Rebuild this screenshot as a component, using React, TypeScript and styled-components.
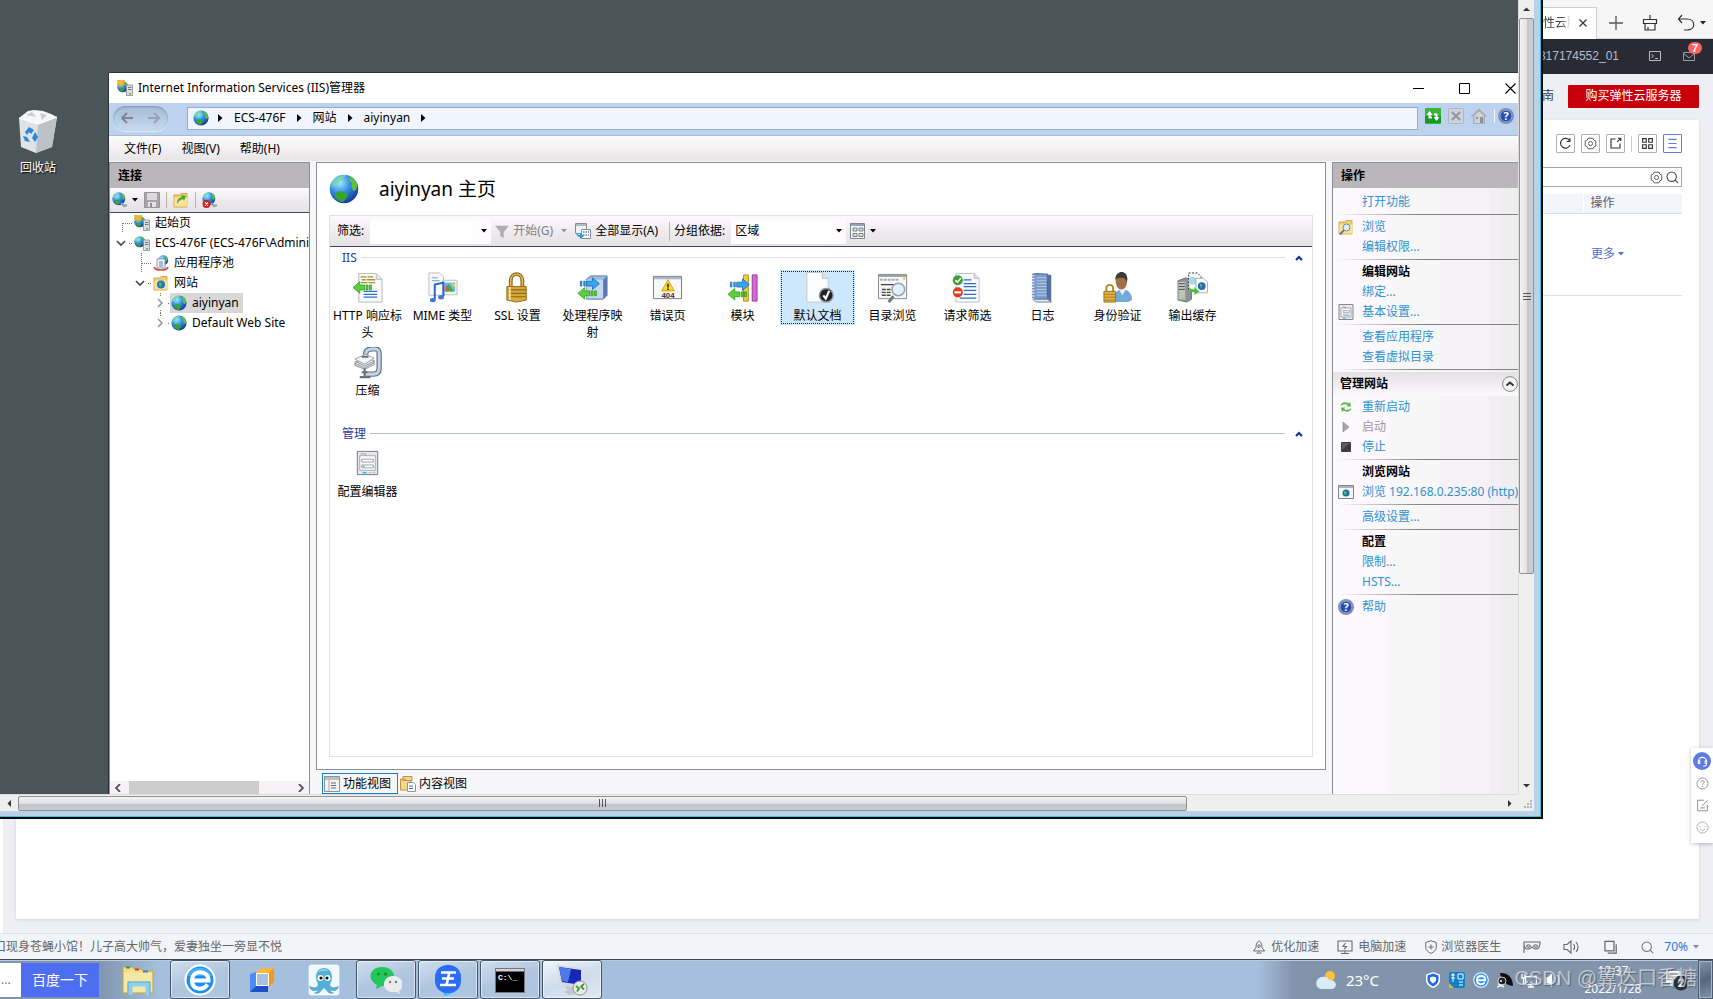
import React from "react";
import styled, { createGlobalStyle, css } from "styled-components";

const ui = '"Noto Sans", "Noto Sans CJK SC", sans-serif';
const web = '"Liberation Sans", "Noto Sans CJK SC", sans-serif';

const GlobalStyle = createGlobalStyle`
  * { box-sizing: border-box; }
  body { margin: 0; overflow: hidden; font: 12px/20px ${ui}; color: #000; }
  button, input, select { font: inherit; color: inherit; margin: 0; padding: 0; border: 0; background: none; border-radius: 0; }
  a { text-decoration: none; color: inherit; }
  ul { list-style: none; margin: 0; padding: 0; }
  h1, h2, h3, p { margin: 0; font: inherit; }
  svg { display: block; flex: none; }
`;

/* ---------- page ---------- */
const Page = styled.div`
  position: relative;
  display: flex;
  flex-direction: column;
  height: 100vh;
  background: #eeeff5;
`;
const Browser = styled.div`
  flex: 1;
  min-height: 0;
  display: flex;
  flex-direction: column;
  font-family: ${web};
`;
const TabStrip = styled.div`
  display: flex;
  justify-content: flex-end;
  align-items: center;
  height: 39px;
  background: #f6f6f7;
  border-bottom: 1px solid #d6d6d8;
  padding: 7px 7px 0 0;
  color: #444;
`;
const BrowserTab = styled.div`
  display: flex;
  align-items: center;
  gap: 8px;
  width: 240px;
  height: 32px;
  justify-content: flex-end;
  padding: 0 9px 0 0;
  margin-right: 12px;
  background: #fff;
  border: 1px solid #cfcfd2;
  border-bottom: 0;
`;
const TabTitle = styled.span`
  width: 40px;
  overflow: hidden;
  white-space: nowrap;
  mask-image: linear-gradient(90deg, #000 75%, transparent);
`;
const BarTools = styled.div<{ $gap: number }>`
  display: flex;
  align-items: center;
  gap: ${(p) => p.$gap}px;
`;
const ConsoleBar = styled.header`
  display: flex;
  justify-content: flex-end;
  align-items: center;
  gap: 30px;
  height: 35px;
  padding: 0 17px 2px 0;
  background: #282b34;
  color: #b9bcc6;
`;
const Mail = styled.button`
  position: relative;
  width: 13px;
  height: 12px;
  margin-left: -8px;
`;
const MailBadge = styled.span`
  position: absolute;
  left: 5px;
  top: -8px;
  width: 14px;
  height: 12px;
  border-radius: 6px;
  background: #fa6461;
  color: #fff;
  font-weight: 700;
  font-size: 11px;
  line-height: 12px;
`;
const ConsoleBody = styled.main`
  flex: 1;
  min-height: 0;
  display: flex;
  flex-direction: column;
  padding: 0 14px 14px 13px;
  border-left: 3px solid #fff;
`;
const ConsoleHead = styled.div`
  display: flex;
  justify-content: flex-end;
  align-items: center;
  gap: 14px;
  height: 46px;
  padding-bottom: 2px;
  color: #3b3f4c;
`;
const BuyButton = styled.button`
  width: 131px;
  height: 23px;
  border-radius: 1px;
  background: #c7000b;
  color: #fff;
`;
const Card = styled.section`
  flex: 1;
  display: flex;
  flex-direction: column;
  align-items: flex-end;
  padding: 14px 17px;
  background: #fff;
  box-shadow: 0 1px 3px rgba(60, 60, 80, 0.15);
`;
const SquareButton = styled.button<{ $on?: boolean }>`
  display: grid;
  place-items: center;
  width: 19px;
  height: 19px;
  border: 1px solid ${(p) => (p.$on ? "#5e7ce0" : "#adb0b8")};
  border-radius: 1px;
`;
const Divider = styled.span<{ $h?: number; $c?: string }>`
  width: 1px;
  height: ${(p) => p.$h ?? 16}px;
  background: ${(p) => p.$c ?? "#ccc"};
`;
const SearchBox = styled.label`
  display: flex;
  align-items: center;
  gap: 3px;
  width: 240px;
  height: 20px;
  margin-top: 14px;
  padding-right: 2px;
  border: 1px solid #a3a6b0;
  input { flex: 1; min-width: 0; outline: 0; }
`;
const ServerTable = styled.table`
  width: 400px;
  margin-top: 7px;
  border-collapse: collapse;
  color: #575d6c;
  th { height: 19px; line-height: 17px; padding: 0; text-align: left; background: #f2f5fc; border-bottom: 1px solid #dfe1e6; font-weight: 400; }
  th + th { width: 99px; padding-left: 7px; border-left: 1px solid #fff; }
  td { height: 82px; padding: 0; border-bottom: 1px solid #dfe1e6; color: #526ecc; }
  td + td { padding-left: 8px; }
`;
const More = styled.a`
  display: flex;
  align-items: center;
  gap: 3px;
`;
const SideDock = styled.aside`
  position: absolute;
  right: 0;
  top: 748px;
  width: 22px;
  height: 95px;
  padding: 4px 0 0 2px;
  display: flex;
  flex-direction: column;
  gap: 4px;
  background: #fff;
  box-shadow: 0 1px 4px rgba(0, 0, 0, 0.25);
`;
const DockButton = styled.button<{ $fill?: boolean }>`
  display: grid;
  place-items: center;
  width: 18px;
  height: 18px;
  border-radius: 9px;
  background: ${(p) => (p.$fill ? "#5e7ce0" : "none")};
`;
const StatusBar = styled.footer`
  display: flex;
  justify-content: space-between;
  align-items: center;
  height: 26px;
  padding: 1px 14px 0 0;
  background: #f1f5f9;
  border-top: 1px solid #dbe5ee;
  color: #666;
`;
const News = styled.a`
  margin-left: -6px;
`;
const StatusTools = styled.div`
  display: flex;
  align-items: center;
  gap: 22px;
`;
const StatusItem = styled.button<{ $gap?: number }>`
  display: flex;
  align-items: center;
  gap: ${(p) => p.$gap ?? 5}px;
`;
const Zoom = styled.span`
  font: 12px/16px ${ui};
  color: #1e7be0;
  margin-right: -5px;
`;

/* ---------- taskbar ---------- */
const Taskbar = styled.nav`
  position: relative;
  display: flex;
  align-items: center;
  justify-content: space-between;
  height: 40px;
  border-top: 1px solid #3c444e;
  box-shadow: inset 0 1px 0 #b9cbe0;
  background: linear-gradient(90deg, #8195ae 0, #8195ae 100px, #a6bfdc 160px, #a6bfdc calc(100% - 455px), #8194ac calc(100% - 420px));
  font-family: ${ui};
  color: #fff;
`;
const TaskGroup = styled.div`
  display: flex;
  align-items: center;
  height: 100%;
`;
const DeskInput = styled.input`
  width: 21px;
  height: 34px;
  background: #fff !important;
  color: #777 !important;
  padding-left: 1px;
`;
const BaiduButton = styled.button`
  width: 78px;
  height: 34px;
  background: #4e6ef2;
  font-size: 14px;
  margin-right: 9px;
`;
const TaskButton = styled.button<{ $open?: boolean; $active?: boolean }>`
  display: grid;
  place-items: center;
  width: 60px;
  height: 39px;
  margin-right: 2px;
  border-radius: 3px;
  ${(p) =>
    p.$open &&
    css`
      border: 1px solid #46566a;
      box-shadow: inset 0 0 0 1px rgba(255, 255, 255, 0.55);
      background: ${p.$active ? "linear-gradient(160deg, #f0f5fa, #cfdcec 50%, #dfe8f2)" : "linear-gradient(160deg, #d0deee, #b0c6df 50%, #adc4df)"};
    `}
`;
const Weather = styled.button`
  display: flex;
  align-items: center;
  gap: 9px;
  margin-right: 46px;
  font-size: 15px;
`;
const Tray = styled.div`
  display: flex;
  align-items: center;
  gap: 8px;
`;
const Clock = styled.time`
  width: 82px;
  margin: 0 11px;
  text-align: center;
  line-height: 18px;
`;
const ShowDesktop = styled.button`
  width: 15px;
  height: 39px;
  margin-left: 9px;
  border: 1px solid #4d5a6b;
  box-shadow: inset 0 0 0 1px #a7b5c6;
  background: linear-gradient(160deg, #8595a8, #56677b 50%, #7f92a8);
`;
const Watermark = styled.p`
  position: absolute;
  right: 16px;
  top: 4px;
  font: 20px/28px ${web};
  color: rgba(225, 228, 232, 0.72);
  text-shadow: 1px 1px 1px rgba(50, 60, 75, 0.55);
  pointer-events: none;
`;

/* ---------- remote session window ---------- */
const Remote = styled.div`
  position: absolute;
  left: 0;
  top: 0;
  width: calc(100% - 170px);
  height: calc(100% - 180px);
  display: grid;
  grid-template-columns: minmax(0, 1fr) 16px;
  grid-template-rows: minmax(0, 1fr) 17px;
  padding: 0 7px 6px 0;
  background: #bad1ea;
  border: solid #000;
  border-width: 0 2px 2px 0;
  box-shadow: inset -1px -1px 0 #35bede;
`;
const Desktop = styled.div`
  position: relative;
  overflow: hidden;
  background: #4a5459;
`;
const DesktopIcon = styled.button`
  position: absolute;
  left: 8px;
  top: 107px;
  width: 60px;
  display: flex;
  flex-direction: column;
  align-items: center;
  gap: 3px;
  color: #fff !important;
  text-shadow: 1px 1px 1px #000;
`;
const Bar = styled.div<{ $v?: boolean }>`
  display: flex;
  flex-direction: ${(p) => (p.$v ? "column" : "row")};
  align-items: center;
  background: #efefef;
  border: 0 solid #dcdcdc;
  border-width: ${(p) => (p.$v ? "0 0 0 1px" : "1px 0 0")};
`;
const BarArrow = styled.button<{ $v?: boolean }>`
  display: grid;
  place-items: center;
  width: ${(p) => (p.$v ? 15 : 18)}px;
  height: ${(p) => (p.$v ? 18 : 16)}px;
`;
const Thumb = styled.div<{ $v?: boolean }>`
  display: grid;
  place-items: center;
  border: 1px solid #8f9194;
  border-radius: 2px;
  ${(p) =>
    p.$v
      ? "width:15px;height:70%;background:linear-gradient(90deg,#f4f4f4,#e3e3e5 50%,#c6c7ca 55%,#cfd0d3);"
      : "height:15px;width:77%;background:linear-gradient(#f4f4f4,#dedfe0 50%,#c2c4c6 55%,#cbccd0);"}
`;
const Spacer = styled.span`
  flex: 1;
`;
const Corner = styled.div`
  display: grid;
  place-items: end;
  padding: 2px;
  background: #efefef;
`;

/* ---------- IIS manager ---------- */
const Win = styled.div`
  position: absolute;
  left: 109px;
  top: 73px;
  right: 0;
  bottom: 0;
  display: flex;
  flex-direction: column;
  background: #f7f6f8;
  box-shadow: 0 -1px 0 #2b3236, -1px 0 0 #2b3236;
`;
const TitleBar = styled.div`
  display: flex;
  align-items: center;
  height: 30px;
  padding-left: 8px;
  background: #fff;
`;
const TitleText = styled.h1`
  margin-left: 5px;
  flex: 1;
`;
const WinButton = styled.button`
  display: grid;
  place-items: center;
  width: 46px;
  height: 28px;
  &:last-child { margin-right: -15px; }
`;
const NavBar = styled.div`
  display: flex;
  align-items: center;
  height: 33px;
  padding: 0 4px 2px;
  background: #bdd2ee;
  border-bottom: 1px solid #a9b9d2;
`;
const BackForward = styled.div`
  display: flex;
  align-items: center;
  justify-content: space-around;
  width: 55px;
  height: 25px;
  border-radius: 13px;
  background: linear-gradient(#a3bad6, #c7daf0);
  box-shadow: inset 0 1px 2px #7f97b5, 0 1px 1px #dfeafa;
`;
const Address = styled.nav`
  flex: 1;
  display: flex;
  align-items: center;
  gap: 11px;
  height: 23px;
  margin: 0 7px 0 19px;
  padding-left: 5px;
  background: #f0f5fe;
  border: 1px solid #98acc9;
  > :first-child { margin-right: -2px; }
`;
const NavTools = styled.div`
  display: flex;
  align-items: center;
  gap: 7px;
  padding-bottom: 4px;
  > :last-child { margin-left: -4px; }
`;
const MenuBar = styled.div`
  display: flex;
  gap: 20px;
  height: 25px;
  padding: 2px 15px 0;
  line-height: 21px;
  background: linear-gradient(#fdfcfd, #f1edf0 60%, #e8e5e7);
  button { height: 21px; }
`;
const Work = styled.div`
  flex: 1;
  min-height: 0;
  display: grid;
  grid-template-columns: 201px minmax(0, 1fr) 186px;
  column-gap: 6px;
  padding-top: 1px;
`;
const Connections = styled.aside`
  display: flex;
  flex-direction: column;
  min-height: 0;
  border: solid #8d8f92;
  border-width: 1px 1px 0;
  background: #fff;
`;
const PaneTitle = styled.h2`
  height: 25px;
  padding: 0 8px;
  line-height: 25px;
  background: #bab7ba;
  font-weight: 600;
`;
const ConnTools = styled.div`
  display: flex;
  align-items: center;
  gap: 6px;
  height: 25px;
  padding: 0 2px;
  background: linear-gradient(#fdfbfd, #ece7eb 60%, #e5e3e5);
  border-bottom: 1px solid #45436b;
`;
const Tree = styled.ul`
  flex: 1;
  overflow: hidden;
  padding-left: 1px;
`;
const TreeRow = styled.li`
  display: flex;
  align-items: center;
  height: 20px;
  white-space: nowrap;
`;
const TreeLink = styled.a<{ $on?: boolean }>`
  display: flex;
  align-items: center;
  gap: 5px;
  height: 20px;
  padding: 0 4px 0 1px;
  background: ${(p) => (p.$on ? "#d9d8d9" : "none")};
`;
const TreeScroll = styled.div`
  display: flex;
  align-items: center;
  justify-content: space-between;
  height: 13px;
  padding: 0 4px;
  background: #f5f1f5;
`;
const TreeThumb = styled.div`
  width: 130px;
  height: 13px;
  margin-right: 32px;
  background: #cdcdcd;
`;
const Center = styled.div`
  display: flex;
  flex-direction: column;
  min-height: 0;
`;
const HomePane = styled.section`
  flex: 1;
  display: flex;
  flex-direction: column;
  padding: 11px 12px 12px;
  background: #fff;
  border: 1px solid #8d8f92;
`;
const HomeTitle = styled.h2`
  display: flex;
  align-items: center;
  gap: 20px;
  height: 30px;
  margin-bottom: 11px;
  font-size: 19px;
  line-height: 28px;
`;
const FeatureBox = styled.div`
  flex: 1;
  border: 1px solid #e4e1e5;
`;
const FilterBar = styled.div`
  display: flex;
  align-items: center;
  height: 31px;
  padding-left: 7px;
  white-space: nowrap;
  background: linear-gradient(#fdfafd, #efeaee 55%, #e4e3e4);
  border-bottom: 1px solid #45436b;
`;
const Combo = styled.div<{ $w: number }>`
  position: relative;
  display: flex;
  align-items: center;
  width: ${(p) => p.$w}px;
  height: 25px;
  margin: 0 4px 0 6px;
  padding-right: 4px;
  background: linear-gradient(90deg, #fff 80%, #fdfafd);
  input, select { flex: 1; min-width: 0; height: 24px; outline: 0; appearance: none; }
  select { padding-left: 4px; }
  svg { pointer-events: none; }
`;
const ToolButton = styled.button<{ $dim?: boolean; $after?: number }>`
  display: flex;
  align-items: center;
  gap: 4px;
  margin-right: ${(p) => p.$after ?? 8}px;
  color: ${(p) => (p.$dim ? "#838083" : "#000")} !important;
`;
const GroupLabel = styled.label`
  margin-left: 4px;
`;
const GroupHead = styled.h3<{ $strong?: boolean }>`
  display: flex;
  align-items: center;
  gap: 4px;
  height: 20px;
  padding: 1px 7px 0 12px;
  color: #1e3c9c;
  &::after {
    content: "";
    order: 1;
    flex: 1;
    height: 1px;
    background: ${(p) => (p.$strong ? "#b4bddd" : "#dedde9")};
  }
  svg { order: 2; margin: 0 2px 0 6px; }
`;
const Grid = styled.div`
  display: grid;
  grid-template-columns: repeat(auto-fill, 75px);
  grid-auto-rows: 75px;
  padding: 2px 60px 4px 0;
`;
const Feature = styled.button<{ $on?: boolean }>`
  display: flex;
  flex-direction: column;
  align-items: center;
  gap: 3px;
  width: 75px;
  height: ${(p) => (p.$on ? "55px" : "72px")};
  padding: 2px 2px 0;
  margin-top: 1px;
  line-height: 17px;
  text-align: center;
  ${(p) => p.$on && css`background: #cde8fd content-box; outline: 1px dotted #222; outline-offset: -2px; background-clip: border-box;`}
`;
const ViewTabs = styled.div`
  display: flex;
  align-items: center;
  height: 24px;
  padding: 3px 0 0 6px;
`;
const ViewTab = styled.button<{ $on?: boolean }>`
  display: flex;
  align-items: center;
  gap: 3px;
  height: 21px;
  padding: 0 6px 0 1px;
  border: 1px solid ${(p) => (p.$on ? "#1481d0" : "transparent")};
`;
const Actions = styled.aside`
  border: solid #8d8f92;
  border-width: 1px 0 0 1px;
  background: linear-gradient(90deg, #fdfafe 0, #fcf6fd 57px, #f7f7f7 57px, #f7f7f7 107px, #f6f2f6 107px, #f6f2f6 156px, #f3eef6 156px, #f3eef6 168px, #eeeeee 168px);
  overflow: hidden;
`;
const rule = css`
  content: "";
  display: block;
  height: 5px;
  background: linear-gradient(90deg, rgba(130, 128, 130, 0), #858386 45%) 4px 2px / 100% 1px no-repeat;
`;
const ActionSection = styled.ul`
  & + &::before { ${rule} }
`;
const ActionRow = styled.li<{ $kind?: "head" | "off" | "link" }>`
  display: flex;
  align-items: center;
  gap: 8px;
  height: 20px;
  padding-left: 5px;
  white-space: nowrap;
  color: ${(p) => (p.$kind === "head" ? "#000" : p.$kind === "off" ? "#9b999b" : "#2f93d0")};
  font-weight: ${(p) => (p.$kind === "head" ? 600 : 400)};
`;
const IconSlot = styled.span`
  display: grid;
  place-items: center;
  width: 16px;
  height: 16px;
  flex: none;
`;
const ActionTop = styled.div`
  padding-top: 4px;
  &::after { ${rule} }
`;
const ActionHead = styled.h3`
  display: flex;
  align-items: center;
  justify-content: space-between;
  height: 24px;
  margin-bottom: 1px;
  padding-left: 7px;
  font-weight: 600;
  background: linear-gradient(#e4e1e4, #fbf9fb);
`;

/* ---------- drawings ---------- */
type S = { s?: number };
const Svg = ({ s = 16, v = 16, h, children }: { s?: number; v?: number; h?: number; children: React.ReactNode }) => (
  <svg width={s} height={h ?? s} viewBox={`0 0 ${v} ${h ? (v * h) / s : v}`} fill="none" aria-hidden="true">
    {children}
  </svg>
);

const GlobeShape = () => (
  <>
    <defs>
      <radialGradient id="globe" cx=".35" cy=".28" r=".8">
        <stop offset="0" stopColor="#a5ecff" />
        <stop offset=".45" stopColor="#3490e2" />
        <stop offset="1" stopColor="#102f96" />
      </radialGradient>
    </defs>
    <circle cx="8" cy="8" r="7.6" fill="url(#globe)" />
    <path d="M1.500 5C3 2 6 .5 9 .6L8 2 6.500 2.600 5.500 5 3 6.500 1.500 7Z" fill="#7bd9a8" opacity=".75" />
    <path d="M11 1.200c2 .8 3.600 2.600 4.200 4.800l-.7 2.500-1.500.5-1.200-2.500.5-1.500L10.800 3.500Z" fill="#5cc040" />
    <path d="M3.500 10l3-1L10 10.500l-.5 2-2 2.600C5 14.800 3.500 13 3 11.500Z" fill="#36a533" />
  </>
);
const Globe = ({ s = 16 }: S) => <Svg s={s}><GlobeShape /></Svg>;
const Tower = () => (
  <>
    <path d="M9.500 5h6v10.500h-6z" fill="#dadedf" stroke="#848b8d" strokeWidth=".8" />
    <path d="M11 7.500h3.500M11 9.500h3.500" stroke="#70787a" />
    <path d="M12 13h2v1.500h-2z" fill="#58b848" />
  </>
);
const ServerIcon = ({ star }: { star?: boolean }) => (
  <Svg>
    <g transform="translate(0 1) scale(.72)"><GlobeShape /></g>
    <Tower />
    {star && <path d="M0 0h3l1 1L6.500 0l1.500.5L7 3l1 2H5L4 7 2.500 5 0 4.500 1 2.500z" fill="#f4b92c" stroke="#c98a15" strokeWidth=".4" />}
  </Svg>
);
const Caret = ({ c = "#000" }: { c?: string }) => <svg width="6" height="4" viewBox="0 0 6 4"><path d="M0 0h6L3 3.500z" fill={c} /></svg>;
const Play = () => <svg width="5" height="8" viewBox="0 0 5 8"><path d="M0 0l4.500 4L0 8z" fill="#000" /></svg>;
const Chevron = () => <Svg s={8} v={8}><path d="M1 6l3-3 3 3" stroke="#0a2f9c" strokeWidth="2" /></Svg>;
const HelpDisc = () => (
  <Svg>
    <circle cx="8" cy="8" r="7.300" fill="#2450b5" stroke="#8d93a0" strokeWidth="1.400" />
    <circle cx="8" cy="8" r="6" stroke="#d6deef" strokeWidth=".7" />
    <text x="8" y="12" textAnchor="middle" fontFamily="Noto Sans" fontWeight="700" fontSize="11" fill="#fff">?</text>
  </Svg>
);
const Folder = ({ children }: { children?: React.ReactNode }) => (
  <Svg>
    <path d="M1 3h6l1-1.500h6V15H1z" fill="#f3cf6c" stroke="#c49a38" strokeWidth=".8" />
    <path d="M1.500 5.500h13v9h-13z" fill="#fae39a" />
    {children}
  </Svg>
);
const Props = ({ s = 16 }: S) => (
  <Svg s={s}>
    <path d="M1 .5h14v15H1z" fill="#e8eaed" stroke="#85888e" />
    <path d="M3 4h10v9H3z" fill="#fff" stroke="#a4a8ae" />
    <path d="M4.500 3h3v2M5 6.500h6.500v1.800H5zM5 10h6.500M5 11.500h6.500" stroke="#9aa0a8" strokeWidth=".8" />
    <path d="M5 14.200h3" stroke="#2bc3f0" />
  </Svg>
);
const Sheet = () => <path d="M7 1.500h18l6 6V31H7z" fill="#f7f9fb" stroke="#b4bac0" />;
const ArrowL = ({ y }: { y: number }) => (
  <path transform={`translate(0 ${y})`} d="M1 7L8 1v3.500h5v5H8V13zM14.500 4.500h2v5h-2zM18 4.500h2v5h-2z" fill="#5fd03c" stroke="#2f9a1d" strokeWidth=".8" />
);
const ArrowR = ({ y }: { y: number }) => (
  <path transform={`translate(2 ${y})`} d="M21 7L14 1v3.500H8v5h6V13zM5 4.500h1.500v5H5zM1.500 4.500H3v5H1.500z" fill="#35a7f0" stroke="#1468b5" strokeWidth=".8" />
);

const art: Record<string, React.ReactNode> = {
  http: (
    <>
      <Sheet />
      <path d="M25 1.500v6h6" stroke="#b4bac0" fill="#e5e8eb" />
      <path d="M9 5h6m1 0h6M10 8h4m1 0h9M9 11h7m1 0h7" stroke="#a8912f" strokeWidth="1.400" />
      <path d="M12 20h14M12 23h14M12 26h14" stroke="#2b77c8" strokeWidth="1.300" />
      <ArrowL y={9} />
    </>
  ),
  mime: (
    <>
      <path d="M2 1h11l4 4v19H2z" fill="#f8f9fb" stroke="#b9bec6" />
      <path d="M5 6h6M5 9h8" stroke="#6a9bd6" />
      <path d="M16 8.500h15v15H16z" fill="#f4f5f7" stroke="#b9bec6" />
      <path d="M18 11h11v9H18z" fill="#69b5ef" />
      <path d="M18 20l4-8 6 8z" fill="#46a838" /><path d="M19 14l4 3-3 3z" fill="#df5b2a" /><path d="M24 12h5v4z" fill="#f3d33f" />
      <path d="M8 28V13l9-2v14" stroke="#2b62c4" strokeWidth="2" />
      <ellipse cx="6" cy="29" rx="3" ry="2.300" fill="#3a79da" /><ellipse cx="14.500" cy="26" rx="3" ry="2.300" fill="#3a79da" />
    </>
  ),
  lock: (
    <>
      <path d="M9 15V9c0-9 12-9 12 0v6" stroke="#8d6a1c" strokeWidth="4" /><path d="M9 15V9c0-9 12-9 12 0v6" stroke="#e0bb58" strokeWidth="1.600" />
      <path d="M5 15h20v14l-10 2-10-2z" fill="#d9a93c" stroke="#936d1d" />
      <path d="M6 18.500h19M6 22h19M6 25.500h19" stroke="#8f6a1f" strokeWidth="1.200" /><path d="M8 15.500v13" stroke="#f8e29b" strokeWidth="2" />
    </>
  ),
  handler: (
    <>
      <path d="M10 7l4-3h17v20l-4 4H10z" fill="#9db9dc" stroke="#6682ab" /><path d="M10 8h17v19H10z" fill="#c6d7ee" /><path d="M27 8l4-4v20l-4 4z" fill="#587bb2" />
      <ArrowR y={5} /><ArrowL y={15} />
    </>
  ),
  error: (
    <>
      <path d="M1.500 4.500h29v23h-29z" fill="#f8f8f8" stroke="#777b82" /><path d="M2 5h28v2.500H2z" fill="#a9b4c4" />
      <path d="M16.500 8L23 19.500H10z" fill="#fcd52a" stroke="#d7a212" /><path d="M16.500 12v4m0 1v1.500" stroke="#222" strokeWidth="1.600" />
      <text x="16.500" y="26.500" textAnchor="middle" fontFamily="Liberation Sans" fontWeight="700" fontSize="8" fill="#333">404</text>
    </>
  ),
  module: (
    <>
      <path d="M17 3h5v27h-5z" fill="#f2cc3e" stroke="#b18f1c" /><path d="M26 3h5v27h-5z" fill="#d765d8" stroke="#9a3aa0" />
      <ArrowR y={6} /><ArrowL y={16} />
    </>
  ),
  doc: (
    <>
      <path d="M5 .5h16l6 6V31H5z" fill="#fbfcfd" stroke="#c3c8ce" /><path d="M21 .5v6h6" fill="#e2e6ea" stroke="#b9bfc5" />
      <circle cx="25" cy="24" r="7" fill="#222" stroke="#8d9196" strokeWidth="1.500" /><path d="M22 24l2.500 3.500L28 19.500" stroke="#fff" strokeWidth="2.200" />
    </>
  ),
  browse: (
    <>
      <path d="M1.500 2.500h29v25h-29z" fill="#f7f7f6" stroke="#85888d" /><path d="M2 3h28v2H2z" fill="#999fa8" /><path d="M3 8h20" stroke="#aaa" strokeDasharray="3 1" strokeWidth="2" /><path d="M28 5v3" stroke="#f0cf38" strokeWidth="2" />
      <path d="M4 13h14M5 18h4m1 0h4M5 21h4m1 0h4M5 24h4m1 0h4" stroke="#444" strokeWidth="1.400" />
      <path d="M17 25l-5 6" stroke="#777" strokeWidth="3" /><circle cx="22" cy="18" r="6.500" fill="#e3f1fb" stroke="#9aa3ad" strokeWidth="1.600" />
    </>
  ),
  filter: (
    <>
      <path d="M4 1.500h19l5 5V31H4z" fill="#f8f9fb" stroke="#bdc2c8" /><path d="M23 1.500v5h5" fill="#e2e5e9" stroke="#b5bac0" />
      <path d="M12 8h8M12 12h13M12 15h13M12 19h13M12 23h13M8 27h17" stroke="#2d6fc0" strokeWidth="1.300" />
      <circle cx="6" cy="8.500" r="5.200" fill="#3f9f3d" /><path d="M3.500 8.500l2 2 3.500-4" stroke="#fff" strokeWidth="1.600" />
      <circle cx="6" cy="21" r="5.200" fill="#df3c1b" /><path d="M2.500 21h7" stroke="#fff" strokeWidth="2.200" />
    </>
  ),
  log: (
    <>
      <path d="M9 1l16 2v28L9 29z" fill="#54729f" /><path d="M6 2h15v26H6z" fill="#7d9cc9" stroke="#4a669a" /><path d="M6 28l3 3h16l-4-3z" fill="#dfe5ee" stroke="#6f86aa" />
      <path d="M10 6h10M10 9h10M10 12h10M10 15h10M10 18h10M10 21h10M10 24h10" stroke="#b3c8e5" /><path d="M6 3v25" stroke="#e3eaf4" strokeWidth="3" strokeDasharray="1.500 1.500" />
    </>
  ),
  auth: (
    <>
      <path d="M12 31c0-9 3-13 9-13 7 0 10 5 10 11l-4 2z" fill="#72aade" /><path d="M17 17l4 7 4-7z" fill="#f0f4f8" />
      <path d="M14 7c0-8 12-8 12 0 0 7-2 11-6 11s-6-4-6-11z" fill="#a36f45" /><path d="M14 8c-1-10 13-11 12 0l-1 3c0-4-2-5-5-5s-4 0-6 2z" fill="#3c3a3a" />
      <path d="M4.500 21v-4c0-5 7-5 7 0v4" stroke="#b5892a" strokeWidth="2" /><path d="M2 20h12v11H2z" fill="#e1b544" stroke="#97711d" /><path d="M2 23h12M2 26h12M2 29h12" stroke="#a67d24" />
    </>
  ),
  cache: (
    <>
      <path d="M1 9l8-3 6 2v20l-5 3-9-2z" fill="#8d9193" stroke="#5f6466" strokeWidth=".8" /><path d="M1.500 10h7v19l-7-1z" fill="#bfc3c5" /><path d="M2 12h6M2 15h6M2 18h6" stroke="#555" />
      <path d="M12 1h9l4 4v14H12z" fill="#f4f8fa" stroke="#333" strokeDasharray="2 1.500" /><circle cx="16" cy="9" r="4" fill="#a8d8e2" />
      <path d="M19.500 6.500h8l4 4v11h-12z" fill="#fafbfc" stroke="#a9afb5" /><circle cx="25.500" cy="14.500" r="4" fill="#2466b7" /><path d="M23 12l3 1-1 4z" fill="#56c34d" />
      <path d="M12 14c1 4 4 4 6 4v-2.500l5 4.500-5 4V21c-4 0-6-3-6-7z" fill="#48c33a" /><circle cx="6" cy="27" r="1.300" fill="#7df04a" />
    </>
  ),
  zip: (
    <>
      <path d="M14 8c0-5 3-6 7-6h3c4 0 4 3 4 6v14c0 4-2 6-6 6h-8" stroke="#5c6f87" strokeWidth="5.500" /><path d="M14 8c0-5 3-6 7-6h3c4 0 4 3 4 6v14c0 4-2 6-6 6h-8" stroke="#c4d2e1" strokeWidth="3.200" />
      <path d="M3 16l11-5 9 3v4l-10 5-10-4z" fill="#e1e3e5" stroke="#7e8184" strokeWidth=".8" /><path d="M3 12.500l11-5 9 4-10 6z" fill="#f7f7f7" stroke="#8b8e91" strokeWidth=".8" /><path d="M3 14.500l10 5 10-5M3 17l10 4.500L23 16" stroke="#888" strokeWidth=".8" />
      <path d="M10 10h7M13 22v8M8 31h11M10 26h6" stroke="#66717e" strokeWidth="2.200" />
    </>
  ),
  config: (
    <>
      <path d="M5.500 3.500h21v24h-21z" fill="#e6e8eb" stroke="#777b80" /><path d="M8 8h16v15H8z" fill="#fff" stroke="#a3a8ae" />
      <path d="M9 6h5v2M10 11.500h12v3H10zM10 17.500h12v3H10z" stroke="#9aa0a7" /><path d="M11 19h2M11 25.500h4" stroke="#2cb9ea" strokeWidth="1.400" /><path d="M17 25.500h3m1 0h3" stroke="#b9bcc0" />
    </>
  ),
};
const Art = ({ n }: { n: string }) => <Svg s={32} v={33}>{art[n]}</Svg>;

const MonitorGlobe = ({ off }: { off?: boolean }) => (
  <Svg>
    <g transform="scale(.85)"><GlobeShape /></g>
    <path d="M9 11l3 3 3-1" stroke="#8da1b0" strokeWidth="2" />
    {off && (<><circle cx="4.500" cy="12" r="4" fill="#d3221f" /><path d="M3 10.500l3 3m0-3l-3 3" stroke="#fff" strokeWidth="1.200" /></>)}
  </Svg>
);

/* ---------- data ---------- */
const features = [
  ["http", "HTTP 响应标头"], ["mime", "MIME 类型"], ["lock", "SSL 设置"], ["handler", "处理程序映射"],
  ["error", "错误页"], ["module", "模块"], ["doc", "默认文档"], ["browse", "目录浏览"],
  ["filter", "请求筛选"], ["log", "日志"], ["auth", "身份验证"], ["cache", "输出缓存"], ["zip", "压缩"],
];

type Act = { t: string; kind?: "head" | "off"; icon?: React.ReactNode };
const topActions: Act[][] = [
  [{ t: "打开功能" }],
  [
    { t: "浏览", icon: <Folder><path d="M6 11l-4 4.500" stroke="#777" strokeWidth="2" /><circle cx="8.500" cy="8.500" r="3.500" fill="#d7ebf9" stroke="#7c8c9c" /></Folder> },
    { t: "编辑权限..." },
  ],
  [{ t: "编辑网站", kind: "head" }, { t: "绑定..." }, { t: "基本设置...", icon: <Props /> }],
  [{ t: "查看应用程序" }, { t: "查看虚拟目录" }],
];
const siteActions: Act[][] = [
  [
    { t: "重新启动", icon: <Svg s={14} v={14}><path d="M1.500 6C2 2 7 1.500 9.500 3.500L11 2l1 4.500H7.500L9 5C6.500 3.500 4 4 1.500 6z" fill="#4fbf46" /><path d="M12.500 8c-.5 4-5.500 4.500-8 2.500L3 12 2 7.500h4.500L5 9c2.500 1.500 5 1 7.500-1z" fill="#4fbf46" /></Svg> },
    { t: "启动", kind: "off", icon: <Svg s={10} v={10}><path d="M2 0l6 5-6 5z" fill="#a5a5a5" stroke="#858585" strokeWidth=".6" /></Svg> },
    { t: "停止", icon: <Svg s={10} v={10}><rect width="10" height="10" rx="1" fill="#3c3c3c" /><path d="M1 1h8L1 8z" fill="#5c5c5c" /></Svg> },
  ],
  [
    { t: "浏览网站", kind: "head" },
    { t: "浏览 192.168.0.235:80 (http)", icon: <Svg><path d="M.5 1.500h15v13H.5z" fill="#f4f6f8" stroke="#7f868d" /><path d="M1 2h14v2H1z" fill="#aab5c1" /><circle cx="8" cy="9" r="3.500" fill="#1f69c0" /><path d="M6 7l3 1-1 3-2-1z" fill="#4fbe47" /></Svg> },
  ],
  [{ t: "高级设置..." }],
  [{ t: "配置", kind: "head" }, { t: "限制..." }, { t: "HSTS..." }],
  [{ t: "帮助", icon: <HelpDisc /> }],
];
const ActionList = ({ groups }: { groups: Act[][] }) => (
  <>
    {groups.map((g, i) => (
      <ActionSection key={i}>
        {g.map((a) => (
          <ActionRow key={a.t} $kind={a.kind}>
            <IconSlot>{a.icon}</IconSlot>
            {a.kind ? <span>{a.t}</span> : <a href="#action">{a.t}</a>}
          </ActionRow>
        ))}
      </ActionSection>
    ))}
  </>
);

const Gutter = ({ w, d, open, x }: { w: number; d: string; open?: boolean; x?: number }) => (
  <svg width={w} height="20" viewBox={`0 0 ${w} 20`} fill="none">
    <path d={d} stroke="#777" strokeDasharray="1 1" />
    {x && (open ? <path d={`M${x - 4} 8l4 4 4-4`} stroke="#444" strokeWidth="1.600" /> : <path d={`M${x - 2} 6l4 4-4 4`} stroke="#999" strokeWidth="1.600" />)}
  </svg>
);
const tree = [
  { t: "起始页", g: <Gutter w={22} d="M11.500 10v10M12 10.500h10" />, i: <ServerIcon star /> },
  { t: "ECS-476F (ECS-476F\\Administrator)", g: <Gutter w={22} d="M18 10.500h4" open x={10} />, i: <ServerIcon /> },
  {
    t: "应用程序池", g: <Gutter w={41} d="M30.500 0v20M31 10.500h10" />,
    i: <Svg><g transform="translate(5 0) scale(.65)"><GlobeShape /></g><path d="M4 4h8v9H4z" fill="#f5f8fb" stroke="#8c98a5" /><path d="M6 7h4M6 9h4M6 11h4" stroke="#4a7fc0" /><path d="M1 12c1 4 13 4 14 0" stroke="#d2463b" strokeWidth="1.600" /></Svg>,
  },
  { t: "网站", g: <Gutter w={41} d="M37 10.500h4" open x={29} />, i: <Folder><circle cx="8" cy="9.500" r="4" fill="#2573c9" /><path d="M6 7l3 1-1 4-2-1z" fill="#4fbe47" /></Folder> },
  { t: "aiyinyan", g: <Gutter w={59} d="M49.500 0v3M49.500 17v3M57 10.500h2" x={49} />, i: <Globe />, on: true },
  { t: "Default Web Site", g: <Gutter w={59} d="M49.500 0v3M57 10.500h2" x={49} />, i: <Globe /> },
];

const line = { stroke: "#666", strokeWidth: 1.1 };
const Gear = () => (
  <Svg s={13}><path d="M5 1.500h6l1 2.300 2.500 1.200v6L12 12.200l-1 2.300H5l-1-2.300L1.500 11V5L4 3.800z" stroke="#555b69" strokeWidth="1.200" /><circle cx="8" cy="8" r="2.500" stroke="#555b69" strokeWidth="1.200" /></Svg>
);
const Lens = ({ c = "#444a58" }: { c?: string }) => <Svg s={13}><circle cx="7" cy="7" r="5.800" stroke={c} strokeWidth="1.300" /><path d="M11 11l4 4" stroke={c} strokeWidth="1.300" /></Svg>;
const IeDisc = ({ s = 32 }: S) => (
  <Svg s={s} v={32}>
    <circle cx="16" cy="16" r="15.500" fill="#fff" /><circle cx="16" cy="16" r="13.500" fill="#1f8fee" /><path d="M4 12C7 1 25 1 28 12z" fill="#48aef8" />
    <path d="M8 16.500h16.500c0-11-16-11-16.500-.5-.5 10 11 11 15.500 4.500" stroke="#fff" strokeWidth="4" />
  </Svg>
);

export default function App() {
  return (
    <>
      <GlobalStyle />
      <Page>
        <Browser>
          <TabStrip>
            <BrowserTab>
              <TabTitle>弹性云服务器</TabTitle>
              <button aria-label="关闭标签"><Svg s={8} v={8}><path d="M.5.5l7 7m0-7l-7 7" stroke="#333" strokeWidth="1.200" /></Svg></button>
            </BrowserTab>
            <BarTools $gap={5}>
              <BarTools $gap={19}>
                <button aria-label="新标签"><Svg s={14} v={14}><path d="M7 0v14M0 7h14" stroke="#555" strokeWidth="1.300" /></Svg></button>
                <button aria-label="清理"><Svg s={16}><path d="M8 0v4M1.500 4.500h13v4h-13zM3 8.500V15h10V8.500M6 12v3" stroke="#333" strokeWidth="1.200" /></Svg></button>
                <button aria-label="撤销"><Svg s={18} v={18}><path d="M5 1L1.500 5 5 9M2 5h8c9 0 9 11 0 11H7" stroke="#333" strokeWidth="1.200" /></Svg></button>
              </BarTools>
              <Caret c="#222" />
            </BarTools>
          </TabStrip>
          <ConsoleBar>
            <span>hw317174552_01</span>
            <button aria-label="终端"><Svg s={12} v={12}><path d="M.5 1.500h11v9H.5zM2.500 4l2 2-2 2M6 8.500h3" stroke="#b9bcc6" /></Svg></button>
            <Mail aria-label="消息">
              <Svg s={12} v={12}><path d="M.5 2.500h11v8H.5zM.5 3.500L6 8l5.500-4.500" stroke="#9a9da8" /></Svg>
              <MailBadge>7</MailBadge>
            </Mail>
          </ConsoleBar>
          <ConsoleBody>
            <ConsoleHead><a href="#guide">使用指南</a><BuyButton>购买弹性云服务器</BuyButton></ConsoleHead>
            <Card>
              <BarTools $gap={6}>
                <SquareButton aria-label="刷新"><Svg s={13}><path d="M13 4.500A6 6 0 1013.500 10M13.500 1.500v4h-4" stroke="#333" strokeWidth="1.400" /></Svg></SquareButton>
                <SquareButton aria-label="设置"><Gear /></SquareButton>
                <SquareButton aria-label="导出"><Svg s={13}><path d="M8 2.500H2.500v11h11V8M10 6l4-4M11 1.500h3.500V5" stroke="#333" strokeWidth="1.400" /></Svg></SquareButton>
                <Divider />
                <SquareButton aria-label="卡片"><Svg s={13}><path d="M2 2h4.500v4.500H2zM9.500 2H14v4.500H9.500zM2 9.500h4.500V14H2zM9.500 9.500H14V14H9.500z" stroke="#333" strokeWidth="1.400" /></Svg></SquareButton>
                <SquareButton $on aria-label="列表"><Svg s={13}><path d="M3 3h10M3 8h10M3 13h10" stroke="#5e7ce0" strokeWidth="1.400" /></Svg></SquareButton>
              </BarTools>
              <SearchBox><input aria-label="搜索" /><Gear /><Lens /></SearchBox>
              <ServerTable>
                <thead><tr><th /><th>操作</th></tr></thead>
                <tbody><tr><td /><td><More href="#more">更多 <Caret c="#526ecc" /></More></td></tr></tbody>
              </ServerTable>
            </Card>
          </ConsoleBody>
          <StatusBar>
            <News href="#news">口现身苍蝇小馆！儿子高大帅气，爱妻独坐一旁显不悦</News>
            <StatusTools>
              <BarTools $gap={18}>
                <StatusItem><Svg s={14}><path d="M8 .8c3 2 3.500 5 3.500 8.200l3 3.500H1.500L4.500 9C4.500 6 5 3 8 .8zM6 14v2M8 13v3M10 14v2" {...line} /><circle cx="8" cy="7" r="1.500" {...line} /></Svg>优化加速</StatusItem>
                <StatusItem><Svg s={16}><path d="M1 2h14v10H1zM8 12v2.500M4 14.500h8M8.500 4L6 7.500h3.500L7 10.500" {...line} /></Svg>电脑加速</StatusItem>
                <StatusItem $gap={3}><Svg s={14}><path d="M8 .8l6 2v6c0 3-3 5-6 6.500C5 13.800 2 11.800 2 8.800v-6zM8 5v6M5 8h6" {...line} /></Svg>浏览器医生</StatusItem>
              </BarTools>
              <StatusItem aria-label="隐私"><Svg s={18} h={12} v={18}><path d="M1 12V1h16c0 5-1 7-5 7-2 0-2-2-3-2S8 8 5 8C2 8 1 6 1 3M3.500 5c1-2 3-1.500 4 0-1 1.500-3 1.500-4 0zM10.500 5c1-1.500 3-2 4 0-1 1.500-3 1.500-4 0z" {...line} /></Svg></StatusItem>
              <StatusItem aria-label="声音"><Svg s={16}><path d="M1 5.500h3l4-3.500v12l-4-3.500H1zM10.500 5c1.500 2 1.500 4 0 6M13 3c2.500 3 2.500 7 0 10" {...line} /></Svg></StatusItem>
              <StatusItem aria-label="窗口"><Svg s={18}><path d="M3.500 3h8v8.500h-8zM6 13.500h7.500V5.500" {...line} /></Svg></StatusItem>
              <StatusItem $gap={10}><Lens c="#777" /><Zoom>70%</Zoom><Caret c="#888" /></StatusItem>
            </StatusTools>
          </StatusBar>
        </Browser>

        <Taskbar>
          <TaskGroup>
            <DeskInput aria-label="搜索" defaultValue="..." />
            <BaiduButton>百度一下</BaiduButton>
            <TaskButton aria-label="文件管理器">
              <Svg s={32} v={32}><path d="M1 3h10l1 2h8l1 2h10v22H1z" fill="#f3df8c" stroke="#c7a542" /><path d="M2 9h28v19H2z" fill="#f7e8a4" /><path d="M4 3.500h4" stroke="#2c9b36" strokeWidth="2" /><path d="M13 5.500h4" stroke="#d83b2f" strokeWidth="2" /><path d="M21 7.500h5" stroke="#2c8ce0" strokeWidth="2" /><path d="M8 31V20h18v11" stroke="#8fd0ee" strokeWidth="5" /><path d="M6 31V18h22v13" stroke="#4f9fc4" strokeWidth=".8" /></Svg>
            </TaskButton>
            <TaskButton $open aria-label="浏览器"><IeDisc /></TaskButton>
            <TaskButton aria-label="虚拟机">
              <Svg s={26} v={26}><path d="M1 7h6v12h12v6H1z" fill="#1c4fc8" /><path d="M1 7l6-2v14l-6 6z" fill="#4b8df5" /><path d="M7 5l6-4h12l-5 5H7z" fill="#fbb738" /><path d="M20 6l5-5v14l-5 5z" fill="#f59a14" /><path d="M7.500 6.500h12v12h-12z" fill="#a9c0de" stroke="#fff" /></Svg>
            </TaskButton>
            <TaskButton aria-label="章鱼">
              <Svg s={32} v={32}><rect x=".5" y=".5" width="31" height="31" rx="3" fill="#f2f9fc" stroke="#c0d6e3" /><path d="M8 13c0-12 16-12 16 0 0 4-2 6-2 8 2 4 5 2 9 1-1 5-5 6-9 4 1 2 3 2 4 3-3 2-6 0-7-2l-3-3-3 3c-1 2-4 4-7 2 1-1 3-1 4-3-4 2-8 1-9-4 4 1 7 3 9-1 0-2-2-4-2-8z" fill="#55aed6" /><path d="M10 9c2-5 8-5 10-2-4-1-7-1-10 2z" fill="#a5daef" /><circle cx="12.500" cy="14" r="3" fill="#fff" /><circle cx="19.500" cy="14" r="3" fill="#fff" /><circle cx="13" cy="14" r="1.600" fill="#111" /><circle cx="19" cy="14" r="1.600" fill="#111" /></Svg>
            </TaskButton>
            <TaskButton $open aria-label="微信">
              <Svg s={32} v={32}><path d="M12 3c16 0 16 19 0 19l-6 3 1-4C-4 15 0 3 12 3z" fill="#22c75c" /><path d="M23 12c11 0 12 12 6 15l1 3-4-2c-16 2-15-16-3-16z" fill="#ececec" /><circle cx="8.500" cy="10" r="1.500" fill="#15843c" /><circle cx="15.500" cy="10" r="1.500" fill="#15843c" /><circle cx="20" cy="18" r="1.200" fill="#777" /><circle cx="26" cy="18" r="1.200" fill="#777" /></Svg>
            </TaskButton>
            <TaskButton $open aria-label="办公">
              <Svg s={32} v={32}><path d="M10 27l3 5c4-1 8-3 12-6z" fill="#35bff5" /><rect x="3" y="1" width="26" height="28" rx="12" fill="#2d6df6" /><path d="M9 8.500h15M10 14.500h12M8 21h16M17.500 8l-3 13" stroke="#fff" strokeWidth="2.600" /></Svg>
            </TaskButton>
            <TaskButton $open aria-label="命令行">
              <Svg s={32} v={32}><path d="M1.500 4.500h29v24h-29z" fill="#000" stroke="#777" /><path d="M2 5h28v2.500H2z" fill="#cfd2d6" /><text x="4" y="16" fontFamily="Liberation Mono" fontWeight="700" fontSize="8" fill="#fff">C:\_</text></Svg>
            </TaskButton>
            <TaskButton $open $active aria-label="远程桌面">
              <Svg s={32} v={32}><path d="M1 1l26 3v20L4 21z" fill="#d7dbe0" /><path d="M3 3l22 3v15L6 18z" fill="#1628b8" /><path d="M3 3l12 2-3 13-6-1z" fill="#4f78ea" /><path d="M9 22l10 1v4l4 3-10 1-5-3 4-2z" fill="#c3c7cc" /><circle cx="24" cy="24" r="7" fill="#e8ebe8" stroke="#92979a" /><path d="M20 22l3 2.500-2 3M28 20l-3 2.500 3 3" stroke="#3c9b36" strokeWidth="1.800" /></Svg>
            </TaskButton>
          </TaskGroup>
          <TaskGroup>
            <Weather>
              <Svg s={21} v={21}><circle cx="14" cy="7" r="5" fill="#fbc23f" /><path d="M6 8c4-1 6 1 7 3 8-1 9 8 3 9H5C-2 19-1 9 6 8z" fill="#d8ebf8" /></Svg>
              23°C
            </Weather>
            <Tray>
              <Svg><path d="M8 0l7 2.500V8c0 4-3 6.500-7 8-4-1.500-7-4-7-8V2.500z" fill="#fff" /><path d="M8 1.500l5.500 2V8c0 3-2.500 5-5.500 6.500C5 13 2.500 11 2.500 8V3.500z" fill="#1c6be8" /><path d="M5 5.500l3-1 3 1V9l-3 2.500L5 9z" fill="#fff" /></Svg>
              <Svg><rect width="16" height="16" rx="2" fill="#1180c4" /><path d="M2 3h4M2 6h4M4 1v9M9 2h5v5H9zM10 10h4M10 13h4" stroke="#fff" /><path d="M0 11l5 5H0z" fill="#f0b32c" /></Svg>
              <IeDisc s={16} />
              <Svg><path d="M3 1c8-1 13 5 13 13-7-1-12-5-13-13z" fill="#101010" /><circle cx="5" cy="9" r="4" fill="#222" stroke="#eee" strokeWidth=".8" /><circle cx="4" cy="9" r="1" fill="#fff" /><path d="M0 15l6-2M1 12l6 3" stroke="#eee" strokeWidth="1.500" /></Svg>
              <Svg><path d="M4.500 4.500h11v8h-11zM7 15h6M10 12v3M1 1v5h3V1M2.500 6v8" stroke="#fff" strokeWidth="1.300" /></Svg>
              <Svg><path d="M0 5h3l4-4v14l-4-4H0z" fill="#fff" /><path d="M9.500 5c1.500 2 1.500 4 0 6M12 3c2.500 3 2.500 7 0 10" stroke="#fff" /></Svg>
            </Tray>
            <Clock>12:37<br />2022/1/28</Clock>
            <Svg s={24} v={24}><path d="M1 3h15v12h-7l-4 4v-4H1z" fill="#fff" /><path d="M3 6h11M3 9h11" stroke="#999" /><circle cx="16" cy="15" r="7.500" fill="#2b3138" /><text x="16" y="19" textAnchor="middle" fontFamily="Noto Sans" fontWeight="700" fontSize="11" fill="#fff">2</text></Svg>
            <ShowDesktop aria-label="显示桌面" />
          </TaskGroup>
          <Watermark>CSDN @翼达口香糖</Watermark>
        </Taskbar>

        <Remote>
          <Desktop>
            <DesktopIcon>
              <Svg s={48} v={48}>
                <path d="M5 11l38-1-5 30-16 6-15-6z" fill="#dfe3e6" /><path d="M24 16l19-6-5 30-16 6z" fill="#bcc3c8" /><path d="M5 11l9-7 6-1 9 1 8 3 6 3-19 7z" fill="#f5f7f8" /><path d="M12 8l6-3 4 5zM26 6l7 2-5 5z" fill="#c6ccd0" /><path d="M5 11l19 6 19-7" stroke="#fff" strokeWidth="1.200" />
                <path d="M11 25l4-5 5 3-3 4-2-2-2 3zM21 25l3 5-3 5-3-4M9 29l4 1 3 5-5-1z" fill="#2788d9" />
              </Svg>
              回收站
            </DesktopIcon>
            <Win>
              <TitleBar>
                <ServerIcon star />
                <TitleText>Internet Information Services (IIS)管理器</TitleText>
                <WinButton aria-label="最小化"><Svg s={11} v={11}><path d="M0 5.500h11" stroke="#000" /></Svg></WinButton>
                <WinButton aria-label="最大化"><Svg s={11} v={11}><path d="M.5.5h10v10H.5z" stroke="#000" /></Svg></WinButton>
                <WinButton aria-label="关闭"><Svg s={11} v={11}><path d="M.5.5l10 10m0-10l-10 10" stroke="#000" strokeWidth="1.100" /></Svg></WinButton>
              </TitleBar>
              <NavBar>
                <BackForward>
                  <button aria-label="后退"><Svg s={12} v={12}><path d="M12 6H1.500M6 1L1 6l5 5" stroke="#83878d" strokeWidth="2" /></Svg></button>
                  <button aria-label="前进"><Svg s={12} v={12}><path d="M0 6h10.500M6 1l5 5-5 5" stroke="#9aa5b3" strokeWidth="2" /></Svg></button>
                </BackForward>
                <Address>
                  <Globe /><Play /><a href="#server">ECS-476F</a><Play /><a href="#sites">网站</a><Play /><a href="#site">aiyinyan</a><Play />
                </Address>
                <NavTools>
                  <button aria-label="刷新"><Svg><rect width="16" height="16" rx="1" fill="#3cb43c" /><path d="M0 8h16v7H0z" fill="#149a1d" /><path d="M4.500 3L1.500 7h2v3.500H7V8.500H5.500V7h2zM11.500 13l3-4h-2V5.500H9v2h1.500V9h-2z" fill="#fff" /></Svg></button>
                  <button aria-label="停止加载"><Svg><rect x=".5" y=".5" width="15" height="15" rx="1" fill="#ccd2d9" stroke="#aeb6bf" /><path d="M4 4l8 8m0-8l-8 8" stroke="#9299a1" strokeWidth="2.400" /></Svg></button>
                  <button aria-label="主页"><Svg><path d="M0 8l8-7.500L16 8l-1 1-1-1v8H2V8L1 9z" fill="#a9afb6" /><path d="M3.500 7.500L8 3.500l4.500 4V15h-9z" fill="#cfd3d8" /><path d="M9 9h3v6H9zM5 9h2v2H5z" fill="#8b9199" /></Svg></button>
                  <Divider $c="#f5f9ff" $h={14} />
                  <button aria-label="帮助"><HelpDisc /></button>
                </NavTools>
              </NavBar>
              <MenuBar><button>文件(F)</button><button>视图(V)</button><button>帮助(H)</button></MenuBar>
              <Work>
                <Connections>
                  <PaneTitle>连接</PaneTitle>
                  <ConnTools>
                    <ToolButton $after={0} aria-label="连接"><MonitorGlobe /><Caret /></ToolButton>
                    <button aria-label="保存"><Svg><path d="M.5.5h15v15H.5z" fill="#a6a4a6" stroke="#989698" /><path d="M3 1h10v7H3z" fill="#dcdadc" /><path d="M4 10h8v5H4z" fill="#e4e2e4" /><path d="M6 11h2v4H6z" fill="#8d8b8d" /></Svg></button>
                    <Divider $c="#b9b4a6" />
                    <button aria-label="上移"><Folder><path d="M4 12c0-5 2-6 5-7L8 3l5 1-2 5-1-2c-3 1-4 2-6 5z" fill="#3fae33" /></Folder></button>
                    <Divider $c="#b9b4a6" />
                    <button aria-label="断开"><MonitorGlobe off /></button>
                  </ConnTools>
                  <Tree>
                    {tree.map((n) => (
                      <TreeRow key={n.t}>{n.g}<TreeLink href="#node" $on={n.on}>{n.i}{n.t}</TreeLink></TreeRow>
                    ))}
                  </Tree>
                  <TreeScroll>
                    <Svg s={8} v={8}><path d="M6 0L2 4l4 4" stroke="#555" strokeWidth="1.800" /></Svg>
                    <TreeThumb />
                    <Svg s={8} v={8}><path d="M2 0l4 4-4 4" stroke="#555" strokeWidth="1.800" /></Svg>
                  </TreeScroll>
                </Connections>
                <Center>
                  <HomePane>
                    <HomeTitle><Globe s={30} />aiyinyan 主页</HomeTitle>
                    <FeatureBox>
                      <FilterBar>
                        <label htmlFor="filter">筛选:</label>
                        <Combo $w={121}><input id="filter" /><Caret /></Combo>
                        <ToolButton $dim><Svg s={14}><path d="M0 2h16L10 9v7l-4-2V9z" fill="#b1aeb1" /></Svg>开始(G)</ToolButton>
                        <ToolButton $dim aria-label="开始选项"><Caret c="#9a979a" /></ToolButton>
                        <ToolButton $after={11}><Svg><path d="M.5.5h11v10H.5z" fill="#f1f4f7" stroke="#858c95" /><path d="M1 1h10v2H1z" fill="#aebbc9" /><path d="M6.500 6.500h9v9h-9z" fill="#fff" stroke="#858c95" /><path d="M8 9h6M8 12h6" stroke="#4d83c4" strokeDasharray="1.500 1" strokeWidth="1.500" /><path d="M1 8c0 3 2 4 4 4v-2l4 3-4 3v-2c-3 0-4-3-4-6z" fill="#2b9ad8" /></Svg>全部显示(A)</ToolButton>
                        <Divider $c="#bdb8a8" $h={19} />
                        <GroupLabel htmlFor="groupby">分组依据:</GroupLabel>
                        <Combo $w={115}><select id="groupby"><option>区域</option></select><Caret /></Combo>
                        <ToolButton aria-label="视图"><Svg><path d="M.5.5h14v15H.5z" fill="#f3f5f7" stroke="#7f868f" /><path d="M1 1h13v2H1z" fill="#93a2b4" /><path d="M3 5h4v3H3zM9 5h4v3H9zM3 10.500h4v3H3zM9 10.500h4v3H9z" stroke="#667" fill="#dce7c4" strokeWidth=".8" /></Svg><Caret /></ToolButton>
                      </FilterBar>
                      <GroupHead>IIS<Chevron /></GroupHead>
                      <Grid>
                        {features.map(([n, t]) => <Feature key={n} $on={n === "doc"}><Art n={n} />{t}</Feature>)}
                      </Grid>
                      <GroupHead $strong>管理<Chevron /></GroupHead>
                      <Grid><Feature><Art n="config" />配置编辑器</Feature></Grid>
                    </FeatureBox>
                  </HomePane>
                  <ViewTabs>
                    <ViewTab $on><Svg><path d="M.5.5h15v15H.5z" fill="#f3f4f2" stroke="#8e9296" /><path d="M1 1h14v3H1z" fill="#b9c0c8" /><path d="M5 4v11" stroke="#aaa" /><path d="M7 7h5M7 9.500h5M7 12h5" stroke="#666" /></Svg>功能视图</ViewTab>
                    <ViewTab><Svg><path d="M3 .5h9v4H3zM.5 3h5l1 1.500H11V14H.5z" fill="#f5d887" stroke="#b8964a" /><path d="M7.500 6.500h6l2 2v7h-8z" fill="#fff" stroke="#8c96a2" /><path d="M9 10h4M9 12.500h4" stroke="#3879c4" /></Svg>内容视图</ViewTab>
                  </ViewTabs>
                </Center>
                <Actions>
                  <PaneTitle>操作</PaneTitle>
                  <ActionTop><ActionList groups={topActions} /></ActionTop>
                  <ActionHead>管理网站<Svg s={16}><circle cx="8" cy="8" r="7.400" fill="#f3f2f3" stroke="#8a888a" /><path d="M4.500 9.500L8 6.500l3.500 3" stroke="#333" strokeWidth="2" /></Svg></ActionHead>
                  <ActionList groups={siteActions} />
                </Actions>
              </Work>
            </Win>
          </Desktop>
          <Bar $v>
            <BarArrow $v aria-label="向上"><Svg s={7} v={7}><path d="M0 5h7L3.500 1.500z" fill="#333" /></Svg></BarArrow>
            <Thumb $v><Svg s={8} v={8}><path d="M0 1.500h8M0 4.500h8M0 7.500h8" stroke="#555" /></Svg></Thumb>
            <Spacer />
            <BarArrow $v aria-label="向下"><Svg s={7} v={7}><path d="M0 2h7L3.500 5.500z" fill="#333" /></Svg></BarArrow>
          </Bar>
          <Bar>
            <BarArrow aria-label="向左"><Svg s={7} v={7}><path d="M5 0v7L1.500 3.500z" fill="#333" /></Svg></BarArrow>
            <Thumb><Svg s={8} v={8}><path d="M1.500 0v8M4.500 0v8M7.500 0v8" stroke="#555" /></Svg></Thumb>
            <Spacer />
            <BarArrow aria-label="向右"><Svg s={7} v={7}><path d="M2 0v7l3.500-3.500z" fill="#333" /></Svg></BarArrow>
          </Bar>
          <Corner><Svg s={9} v={9}><path d="M7 1h2M4 4h2M7 4h2M1 7h2M4 7h2M7 7h2" stroke="#b5b5b5" strokeWidth="2" /></Svg></Corner>
        </Remote>

        <SideDock>
          <DockButton $fill aria-label="客服"><Svg s={11}><path d="M2 11V8a6 6 0 0112 0v3c0 2-2 4-5 4M2 7v4h2V7zM14 7v4h-2V7z" stroke="#fff" strokeWidth="1.500" /></Svg></DockButton>
          <DockButton aria-label="问题"><Svg s={13}><circle cx="8" cy="8" r="6.800" stroke="#777d8a" /><path d="M6 6.500c0-3 4.500-2.500 4 0-.3 1.200-2 1.500-2 3M8 11v1.200" stroke="#777d8a" /></Svg></DockButton>
          <DockButton aria-label="反馈"><Svg s={13}><path d="M10 1.500H2v13h12V7M7 8.500l7.500-7M5 11h6" stroke="#8a8f9b" strokeWidth="1.200" /></Svg></DockButton>
          <DockButton aria-label="评价"><Svg s={13}><circle cx="8" cy="8" r="6.800" stroke="#9a9fab" /><path d="M5 6v1.500M11 6v1.500M5 10c1.500 2 4.500 2 6 0" stroke="#9a9fab" /></Svg></DockButton>
        </SideDock>
      </Page>
    </>
  );
}
